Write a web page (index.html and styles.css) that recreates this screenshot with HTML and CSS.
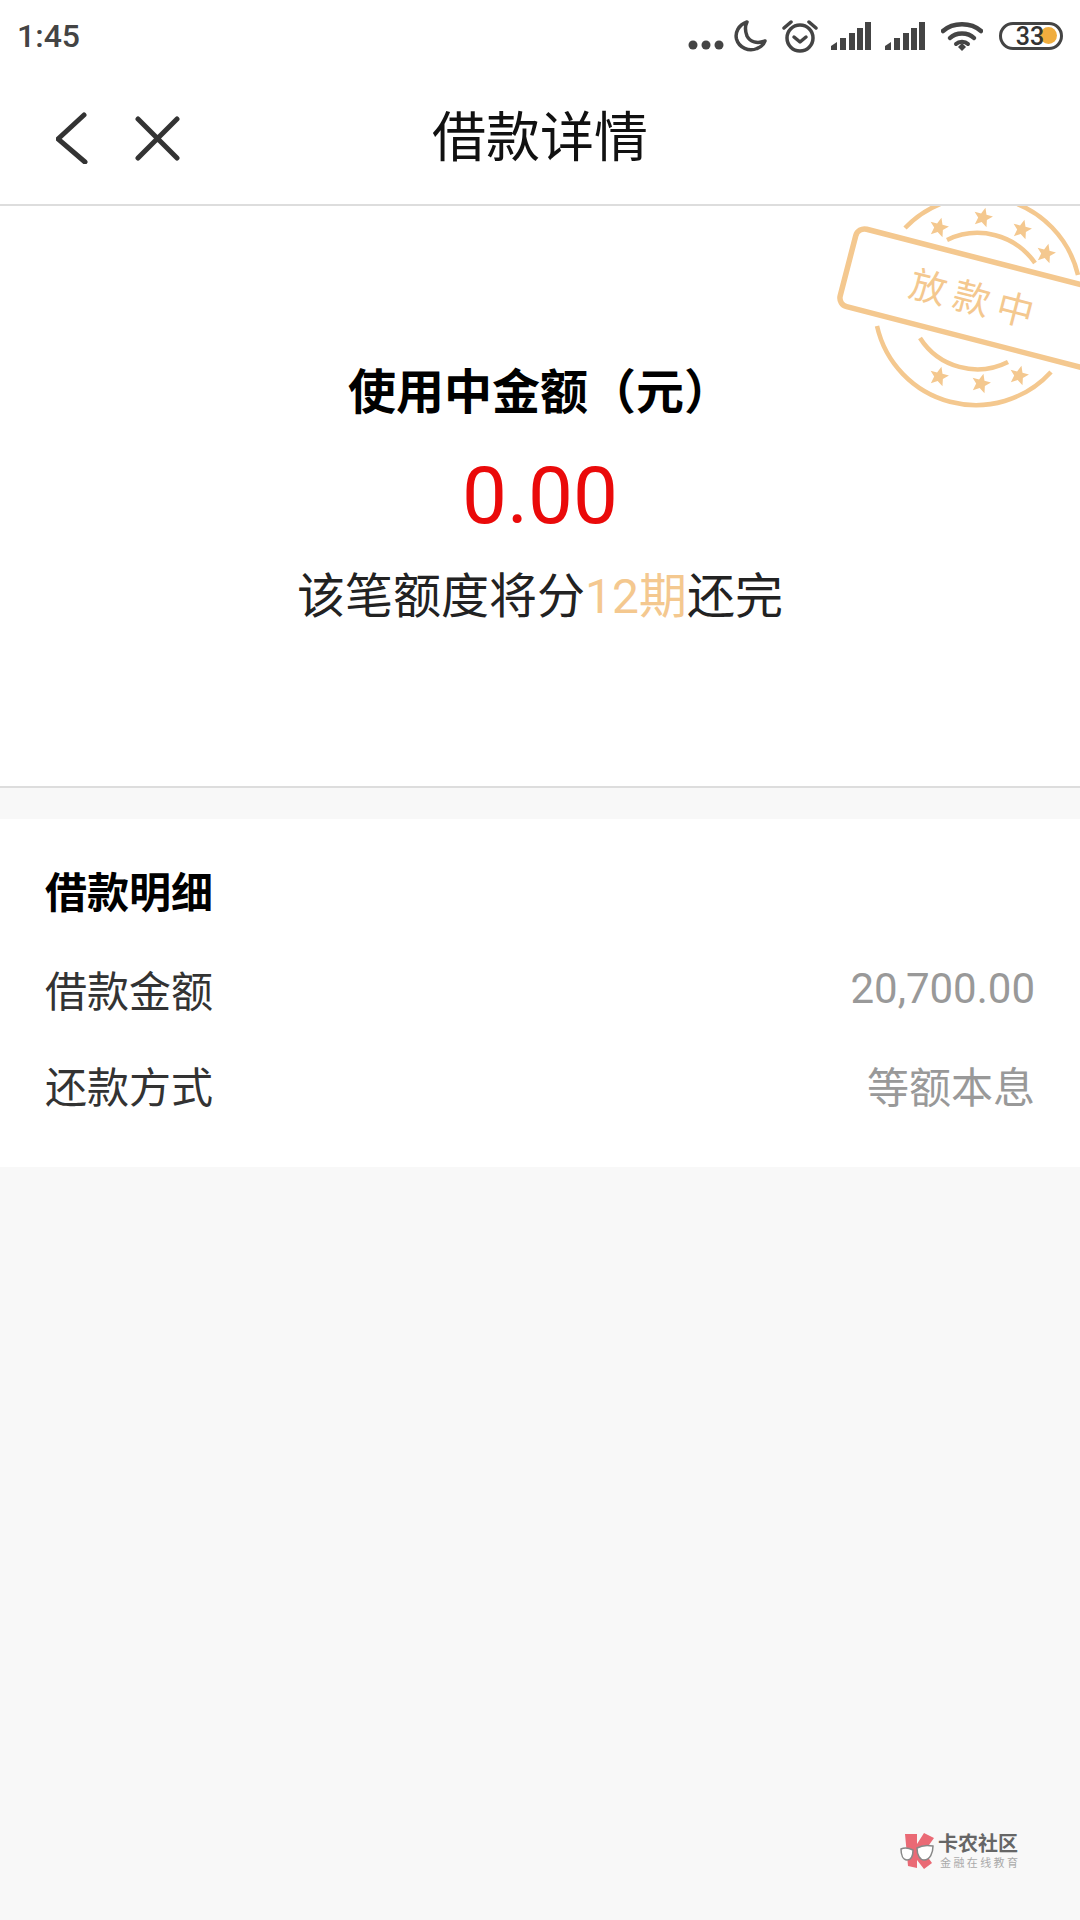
FILE: index.html
```html
<!DOCTYPE html>
<html lang="zh-CN">
<head>
    <meta charset="UTF-8">
    <meta name="viewport" content="width=device-width, initial-scale=1.0">
    <title>借款详情</title>
    <link rel="stylesheet" href="styles.css">
</head>
<body>
    <div class="status-bar">
        <span class="status-time">1:45</span>
        <div class="status-icons">
            <svg class="icon-dots" width="36" height="10" viewBox="0 0 36 10"><circle cx="5" cy="5" r="4.500"/><circle cx="18" cy="5" r="4.500"/><circle cx="31" cy="5" r="4.500"/></svg>
            <svg class="icon-moon" width="34" height="32" viewBox="0 0 34 32"><path d="M14 2C5 5 2 13 3.500 19C6 28 16 32 24 28.500C28 27 31 24 32 21C24 24 17 22 14 16C12 11 12 6 14 2Z"/></svg>
            <svg class="icon-alarm" width="36" height="34" viewBox="0 0 36 34"><circle cx="18" cy="19" r="13"/><path d="M12 18L18 23L24 18"/><path d="M2 9L9 3M34 9L27 3"/></svg>
            <svg class="icon-signal" width="40" height="28" viewBox="0 0 40 28"><path d="M0 28V24L6 20V28ZM9 28V16H15V28ZM18 28V11H24V28ZM26 28V6H32V28ZM34 28V0H40V28Z"/></svg>
            <svg class="icon-signal" width="40" height="28" viewBox="0 0 40 28"><path d="M0 28V24L6 20V28ZM9 28V16H15V28ZM18 28V11H24V28ZM26 28V6H32V28ZM34 28V0H40V28Z"/></svg>
            <svg class="icon-wifi" width="42" height="30" viewBox="0 0 42 30"><path d="M2 10C12 1 30 1 40 10"/><path d="M9 17C15 11 27 11 33 17"/><path d="M15 23C18 20 24 20 27 23" class="wifi-inner"/><path d="M17 26L21 22L25 26L21 30Z" class="wifi-dot"/></svg>
            <div class="battery">
                <span class="battery-fill"></span>
                <span class="battery-text">33</span>
            </div>
        </div>
    </div>

    <header class="nav-bar">
        <div class="nav-icons">
            <svg width="32" height="52" viewBox="0 0 32 52"><path d="M28 3L2 27L29 50"/></svg>
            <svg width="45" height="45" viewBox="0 0 45 45"><path d="M3 3L42 42M42 3L3 42"/></svg>
        </div>
        <h1 class="nav-title">借款详情</h1>
    </header>

    <section class="summary">
        <svg class="stamp" width="260" height="214" viewBox="820 206 260 214">
            <defs>
                <polygon id="star" points="0,-9.500 2.800,-3 9.500,-3 4.500,1.800 6,9 0,5.200 -6,9 -4.500,1.800 -9.500,-3 -2.800,-3"/>
            </defs>
            <path class="stamp-line" d="M905 228A102 102 0 0 1 1078 275"/>
            <path class="stamp-line" d="M877 326A101.500 101.500 0 0 0 1051 372"/>
            <path class="stamp-line" d="M947 240A70 70 0 0 1 1035 263"/>
            <path class="stamp-line" d="M920 338A68 68 0 0 0 1008 362"/>
            <g class="stamp-stars">
                <use href="#star" transform="translate(939 227) rotate(15)"/>
                <use href="#star" transform="translate(983 217) rotate(15)"/>
                <use href="#star" transform="translate(1022 229) rotate(15)"/>
                <use href="#star" transform="translate(1046 253) rotate(15)"/>
                <use href="#star" transform="translate(939 376) rotate(15)"/>
                <use href="#star" transform="translate(981 383) rotate(15)"/>
                <use href="#star" transform="translate(1019 375) rotate(15)"/>
            </g>
            <g transform="translate(858 227) rotate(14.5)">
                <rect class="stamp-band" x="0" y="0" width="320" height="80" rx="9"/>
                <text class="stamp-text" x="132" y="54" text-anchor="middle">放款中</text>
            </g>
        </svg>
        <div class="summary-label">使用中金额（元）</div>
        <div class="summary-amount">0.00</div>
        <div class="summary-note">该笔额度将分<span class="highlight">12期</span>还完</div>
    </section>

    <section class="details">
        <h2 class="details-title">借款明细</h2>
        <div class="details-row">
            <span>借款金额</span>
            <span class="details-value">20,700.00</span>
        </div>
        <div class="details-row">
            <span>还款方式</span>
            <span class="details-value">等额本息</span>
        </div>
    </section>

    <div class="watermark">
        <svg width="36" height="38" viewBox="0 0 36 38">
            <path class="logo-k" d="M5 2H17V12L24 1L34 6L24 20L32 31L24 37L17 28V36L8 34Z"/>
            <path class="logo-glass" d="M1 17C5 15 9 16 13 18C13 24 11 28 7 28C3 28 1 23 1 17ZM17 16C22 13 28 13 33 14C33 21 30 28 24 28C20 28 17 23 17 16Z"/>
        </svg>
        <div class="watermark-text">
            <span class="watermark-name">卡农社区</span>
            <span class="watermark-sub">金融在线教育</span>
        </div>
    </div>
</body>
</html>
```

FILE: styles.css
```css
* {
    box-sizing: border-box;
}

body {
    font-family: Roboto, "Noto Sans CJK SC", sans-serif;
    margin: 0;
    padding: 0;
    width: 1080px;
    height: 1920px;
    position: relative;
    overflow: hidden;
    background-color: #f8f8f8;
    color: #000;
}

.status-bar {
    height: 72px;
    background-color: #fff;
    display: flex;
    align-items: center;
    justify-content: space-between;
    padding: 0 17px 0 17px;
}

.status-time {
    font-size: 32px;
    font-weight: 500;
    color: #444;
}

.status-icons {
    display: flex;
    align-items: center;
}

.status-icons svg {
    display: block;
}

.icon-dots {
    fill: #444;
    margin-top: 18px;
    margin-right: 9px;
}

.icon-moon {
    fill: none;
    stroke: #444;
    stroke-width: 3.500;
    stroke-linejoin: round;
    margin-right: 15px;
}

.icon-alarm {
    fill: none;
    stroke: #444;
    stroke-width: 3.500;
    stroke-linecap: round;
    stroke-linejoin: round;
    margin-right: 13px;
}

.icon-signal {
    fill: #444;
    margin-right: 14px;
}

.icon-wifi {
    fill: none;
    stroke: #444;
    stroke-width: 4.500;
    stroke-linecap: round;
    margin-left: 2px;
    margin-right: 16px;
}

.icon-wifi .wifi-inner {
    stroke-width: 4;
}

.icon-wifi .wifi-dot {
    fill: #444;
    stroke: none;
}

.battery {
    width: 64px;
    height: 28px;
    border: 3.500px solid #444;
    border-radius: 14px;
    position: relative;
    display: flex;
    align-items: center;
    justify-content: center;
}

.battery-fill {
    position: absolute;
    right: 3px;
    top: 2px;
    width: 17px;
    height: 17px;
    border-radius: 50%;
    background-color: #f0ad3e;
}

.battery-text {
    position: relative;
    font-size: 25px;
    font-weight: 500;
    line-height: 1;
    color: #333;
    margin-left: -2px;
}

.nav-bar {
    height: 134px;
    background-color: #fff;
    border-bottom: 2px solid #ddd;
    display: flex;
    align-items: center;
    justify-content: center;
    position: relative;
}

.nav-icons {
    position: absolute;
    left: 56px;
    top: 40px;
    display: flex;
    align-items: center;
    gap: 47px;
}

.nav-icons svg {
    display: block;
    fill: none;
    stroke: #333;
    stroke-width: 5;
    stroke-linecap: round;
    stroke-linejoin: miter;
}

.nav-title {
    margin: 2px 0 0;
    font-size: 54px;
    font-weight: 400;
    line-height: 64px;
    color: #111;
}

.summary {
    height: 582px;
    background-color: #fff;
    border-bottom: 2px solid #ddd;
    position: relative;
    overflow: hidden;
    display: flex;
    flex-direction: column;
    align-items: center;
    padding-top: 155px;
}

.stamp {
    position: absolute;
    right: 0;
    top: 0;
}

.stamp-line {
    fill: none;
    stroke: #f4c88f;
    stroke-width: 4.500;
}

.stamp-stars {
    fill: #f4c88f;
}

.stamp-band {
    fill: #fff;
    stroke: #f4c88f;
    stroke-width: 5.500;
}

.stamp-text {
    fill: #f4c88f;
    font-size: 37px;
    letter-spacing: 8px;
}

.summary-label {
    font-size: 48px;
    font-weight: 700;
    line-height: 64px;
}

.summary-amount {
    margin-top: 19px;
    font-size: 80px;
    line-height: 104px;
    color: #ea0a0a;
}

.summary-note {
    margin-top: 17px;
    font-size: 48px;
    line-height: 64px;
    color: #222;
}

.highlight {
    color: #f4c88f;
}

.details {
    margin-top: 31px;
    height: 348px;
    background-color: #fff;
    padding: 29px 45px 0;
}

.details-title {
    margin: 0;
    font-size: 42px;
    font-weight: 700;
    line-height: 92px;
}

.details-row {
    height: 96px;
    display: flex;
    align-items: center;
    justify-content: space-between;
    font-size: 42px;
    color: #333;
}

.details-value {
    color: #999;
}

.watermark {
    position: absolute;
    left: 900px;
    top: 1832px;
    display: flex;
    align-items: flex-start;
    gap: 2px;
}

.logo-k {
    fill: #ea6a75;
}

.logo-glass {
    fill: #fff;
    stroke: #888;
    stroke-width: 1.500;
}

.watermark-text {
    display: flex;
    flex-direction: column;
}

.watermark-name {
    font-size: 20px;
    font-weight: 700;
    line-height: 24px;
    color: #666;
}

.watermark-sub {
    margin-left: 2px;
    font-size: 11px;
    line-height: 16px;
    letter-spacing: 2.400px;
    color: #aaa;
}
```
